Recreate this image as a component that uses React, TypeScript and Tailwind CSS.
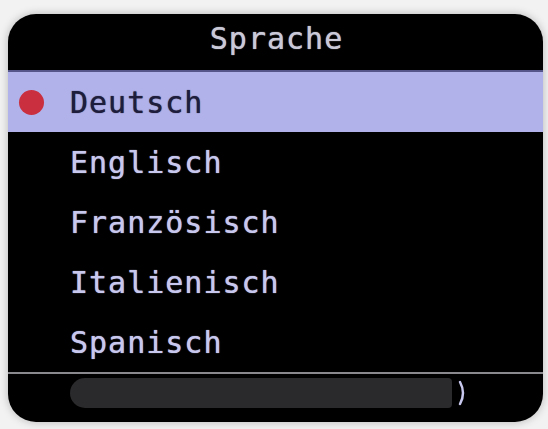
import React from 'react';

// OSD language menu
const languages = ['Deutsch', 'Englisch', 'Französisch', 'Italienisch', 'Spanisch'];

export default function App() {
  const selected = 0;

  return (
    <div className="w-[548px] h-[429px] bg-[#f2f2f2] pt-[14px] pl-[8px] pr-[5px]" style={{ fontFamily: '"DejaVu Sans Mono", monospace' }}>
      <div className="h-[408px] rounded-[28px] bg-black overflow-hidden flex flex-col shadow-[0_0_8px_rgba(0,0,0,0.25)]">
        {/* title */}
        <div className="h-[56px] flex items-center justify-center pb-[8px] pl-[2px]">
          <span className="text-[30px] tracking-[1px] text-[#c9c9d8] [text-shadow:0_0_1px_#c9c9d8]">Sprache</span>
        </div>
        <div className="h-[2px] bg-[#55558a]" />

        {languages.map((lang, i) => (
          <div
            key={lang}
            className={`h-[60px] flex items-center ${i === selected ? 'bg-[#b2b2ea]' : ''}`}
          >
            <div className="w-[62px] flex items-center pl-[11px]">
              {i === selected && <span className="w-[25px] h-[25px] rounded-full bg-[#c92f3e]" />}
            </div>
            <span
              className={`text-[30px] tracking-[1px] ${
                i === selected
                  ? 'text-[#1e1e3c] [text-shadow:0_0_1px_#1e1e3c]'
                  : 'text-[#c8c8ee] [text-shadow:0_0_1px_#c8c8ee]'
              }`}
            >
              {lang}
            </span>
          </div>
        ))}

        <div className="h-[2px] bg-[#8a8a8e]" />

        {/* bottom bar */}
        <div className="flex-1 flex items-start pt-[4px] pl-[62px]">
          <div className="w-[382px] h-[30px] rounded-l-[15px] rounded-r-[4px] bg-[#2a2a2c]" />
          <svg width="12" height="30" viewBox="0 0 12 30" className="ml-[5px]">
            <path d="M3 4 Q9 15 3 26" stroke="#c8c8ee" strokeWidth="2.5" fill="none" strokeLinecap="round" />
          </svg>
        </div>
      </div>
    </div>
  );
}
